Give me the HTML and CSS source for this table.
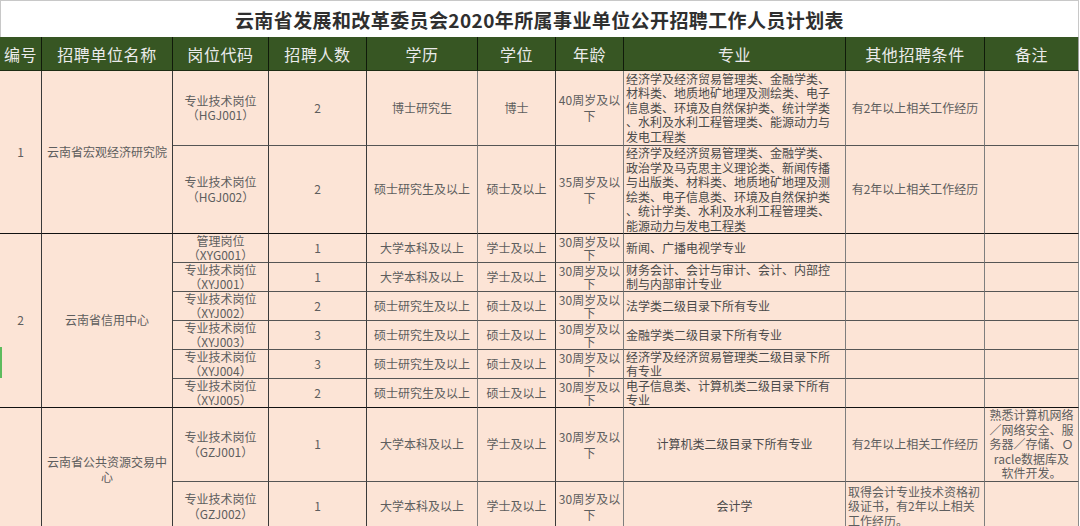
FILE: index.html
```html
<!DOCTYPE html>
<html lang="zh-CN">
<head>
<meta charset="utf-8">
<title>云南省发展和改革委员会2020年所属事业单位公开招聘工作人员计划表</title>
<link rel="stylesheet" href="styles.css">
</head>
<body>
<div class="sheet">
  <div class="title">云南省发展和改革委员会2020年所属事业单位公开招聘工作人员计划表</div>
  <table class="plan">
    <colgroup>
      <col class="w-no"><col class="w-unit"><col class="w-code"><col class="w-num"><col class="w-edu">
      <col class="w-deg"><col class="w-age"><col class="w-major"><col class="w-cond"><col class="w-note">
    </colgroup>
    <thead>
      <tr>
        <th>编号</th><th>招聘单位名称</th><th>岗位代码</th><th>招聘人数</th><th>学历</th>
        <th>学位</th><th>年龄</th><th>专业</th><th>其他招聘条件</th><th class="last">备注</th>
      </tr>
    </thead>
    <tbody>
      <tr class="h75">
        <td rowspan="2" class="grp">1</td>
        <td rowspan="2" class="grp">云南省宏观经济研究院</td>
        <td class="mid">专业技术岗位<br>（HGJ001）</td>
        <td class="mid">2</td>
        <td class="soft mid">博士研究生</td>
        <td class="mid">博士</td>
        <td class="soft mid age">40周岁及以<br>下</td>
        <td class="soft mid left major">经济学及经济贸易管理类、金融学类、<br>材料类、地质地矿地理及测绘类、电子<br>信息类、环境及自然保护类、统计学类<br>、水利及水利工程管理类、能源动力与<br>发电工程类</td>
        <td class="soft mid">有2年以上相关工作经历</td>
        <td class="last mid"></td>
      </tr>
      <tr class="h88">
        <td class="grp">专业技术岗位<br>（HGJ002）</td>
        <td class="grp">2</td>
        <td class="soft grp">硕士研究生及以上</td>
        <td class="grp">硕士及以上</td>
        <td class="soft grp age">35周岁及以<br>下</td>
        <td class="soft grp left major">经济学及经济贸易管理类、金融学类、<br>政治学及马克思主义理论类、新闻传播<br>与出版类、材料类、地质地矿地理及测<br>绘类、电子信息类、环境及自然保护类<br>、统计学类、水利及水利工程管理类、<br>能源动力与发电工程类</td>
        <td class="soft grp">有2年以上相关工作经历</td>
        <td class="last grp"></td>
      </tr>

      <tr class="h29">
        <td rowspan="6" class="grp">2</td>
        <td rowspan="6" class="grp">云南省信用中心</td>
        <td class="tight">管理岗位<br>（XYG001）</td>
        <td>1</td>
        <td class="soft">大学本科及以上</td>
        <td>学士及以上</td>
        <td class="soft age small">30周岁及以<br>下</td>
        <td class="soft left major tight">新闻、广播电视学专业</td>
        <td class="soft"></td>
        <td class="last"></td>
      </tr>
      <tr class="h29">
        <td class="tight">专业技术岗位<br>（XYJ001）</td>
        <td>1</td>
        <td class="soft">大学本科及以上</td>
        <td>学士及以上</td>
        <td class="soft age small">30周岁及以<br>下</td>
        <td class="soft left major tight">财务会计、会计与审计、会计、内部控<br>制与内部审计专业</td>
        <td class="soft"></td>
        <td class="last"></td>
      </tr>
      <tr class="h29">
        <td class="tight">专业技术岗位<br>（XYJ002）</td>
        <td>2</td>
        <td class="soft">硕士研究生及以上</td>
        <td>硕士及以上</td>
        <td class="soft age small">30周岁及以<br>下</td>
        <td class="soft left major tight">法学类二级目录下所有专业</td>
        <td class="soft"></td>
        <td class="last"></td>
      </tr>
      <tr class="h29">
        <td class="tight">专业技术岗位<br>（XYJ003）</td>
        <td>3</td>
        <td class="soft">硕士研究生及以上</td>
        <td>硕士及以上</td>
        <td class="soft age small">30周岁及以<br>下</td>
        <td class="soft left major tight">金融学类二级目录下所有专业</td>
        <td class="soft"></td>
        <td class="last"></td>
      </tr>
      <tr class="h29">
        <td class="tight">专业技术岗位<br>（XYJ004）</td>
        <td>3</td>
        <td class="soft">硕士研究生及以上</td>
        <td>硕士及以上</td>
        <td class="soft age small">30周岁及以<br>下</td>
        <td class="soft left major tight">经济学及经济贸易管理类二级目录下所<br>有专业</td>
        <td class="soft"></td>
        <td class="last"></td>
      </tr>
      <tr class="h29">
        <td class="tight grp">专业技术岗位<br>（XYJ005）</td>
        <td class="grp">2</td>
        <td class="soft grp">硕士研究生及以上</td>
        <td class="grp">硕士及以上</td>
        <td class="soft age small grp">30周岁及以<br>下</td>
        <td class="soft left major tight grp">电子信息类、计算机类二级目录下所有<br>专业</td>
        <td class="soft grp"></td>
        <td class="last grp"></td>
      </tr>

      <tr class="h74">
        <td rowspan="2" class="grp"></td>
        <td rowspan="2" class="grp">云南省公共资源交易中<br>心</td>
        <td>专业技术岗位<br>（GZJ001）</td>
        <td>1</td>
        <td class="soft">大学本科及以上</td>
        <td>学士及以上</td>
        <td class="soft age">30周岁及以<br>下</td>
        <td class="soft major">计算机类二级目录下所有专业</td>
        <td class="soft">有2年以上相关工作经历</td>
        <td class="last note">熟悉计算机网络<br>／网络安全、服<br>务器／存储、Ｏ<br>racle数据库及<br>软件开发。</td>
      </tr>
      <tr class="h50">
        <td class="grp">专业技术岗位<br>（GZJ002）</td>
        <td class="grp">1</td>
        <td class="soft grp">大学本科及以上</td>
        <td class="grp">学士及以上</td>
        <td class="soft age grp">30周岁及以<br>下</td>
        <td class="soft major grp">会计学</td>
        <td class="soft left grp">取得会计专业技术资格初<br>级证书，有2年以上相关<br>工作经历。</td>
        <td class="last grp"></td>
      </tr>
    </tbody>
  </table>
  <div class="mark"></div>
</div>
</body>
</html>
```

FILE: styles.css
```css
html, body {
  margin: 0;
  padding: 0;
  background: #ffffff;
  overflow: hidden;
}

body {
  font-family: "Noto Sans CJK SC", "Noto Sans", sans-serif;
}

.sheet {
  position: relative;
  width: 1079px;
  height: 526px;
  overflow: hidden;
}

.title {
  box-sizing: border-box;
  width: 1079px;
  height: 37px;
  border: 1px solid #c8c8c8;
  border-bottom: 0;
  text-align: center;
  font-size: 19px;
  font-weight: 700;
  line-height: 38px;
  letter-spacing: 0.4px;
  color: #2f2f2f;
  white-space: nowrap;
}

.plan {
  width: 1079px;
  table-layout: fixed;
  border-collapse: separate;
  border-spacing: 0;
}

.w-no { width: 42px; }
.w-unit { width: 131px; }
.w-code { width: 96px; }
.w-num { width: 98px; }
.w-edu { width: 111px; }
.w-deg { width: 78px; }
.w-age { width: 68px; }
.w-major { width: 222px; }
.w-cond { width: 139px; }
.w-note { width: 94px; }

.plan th {
  height: 33px;
  padding: 0;
  background: #375623;
  color: #ebebeb;
  font-size: 16px;
  font-weight: 400;
  letter-spacing: 0.6px;
  text-align: center;
  vertical-align: middle;
  border-right: 1px solid #101a0a;
  border-bottom: 1px solid #1d2c13;
  white-space: nowrap;
}

.plan th.last {
  border-right-color: #a0a0a0;
}

.plan td {
  padding: 0;
  background: #fce4d6;
  color: #5e5e5e;
  font-size: 12px;
  line-height: 14.5px;
  text-align: center;
  vertical-align: middle;
  border-right: 1px solid #3a3a3a;
  border-bottom: 1px solid #555;
  white-space: nowrap;
  overflow: hidden;
}

.plan td.grp {
  border-bottom-color: #111;
}

.plan td.soft {
  border-right-color: #7e7e7e;
}

.plan td.last {
  border-right-color: #8c8c8c;
}

.plan td.left {
  text-align: left;
  padding-left: 2px;
}

.plan td.major {
  color: #4a4a4a;
}

.plan td.age {
  line-height: 16px;
}

.plan td.age.small {
  line-height: 13px;
}

.plan td.tight {
  line-height: 14px;
}

.plan td.note {
  line-height: 14.5px;
}

.h75 { height: 75px; }
.h88 { height: 88px; }
.h29 { height: 29px; }
.h74 { height: 74px; }
.h50 { height: 50px; }

.mark {
  position: absolute;
  left: 0;
  top: 347px;
  width: 2px;
  height: 31px;
  background: #5dbb5d;
}
```
